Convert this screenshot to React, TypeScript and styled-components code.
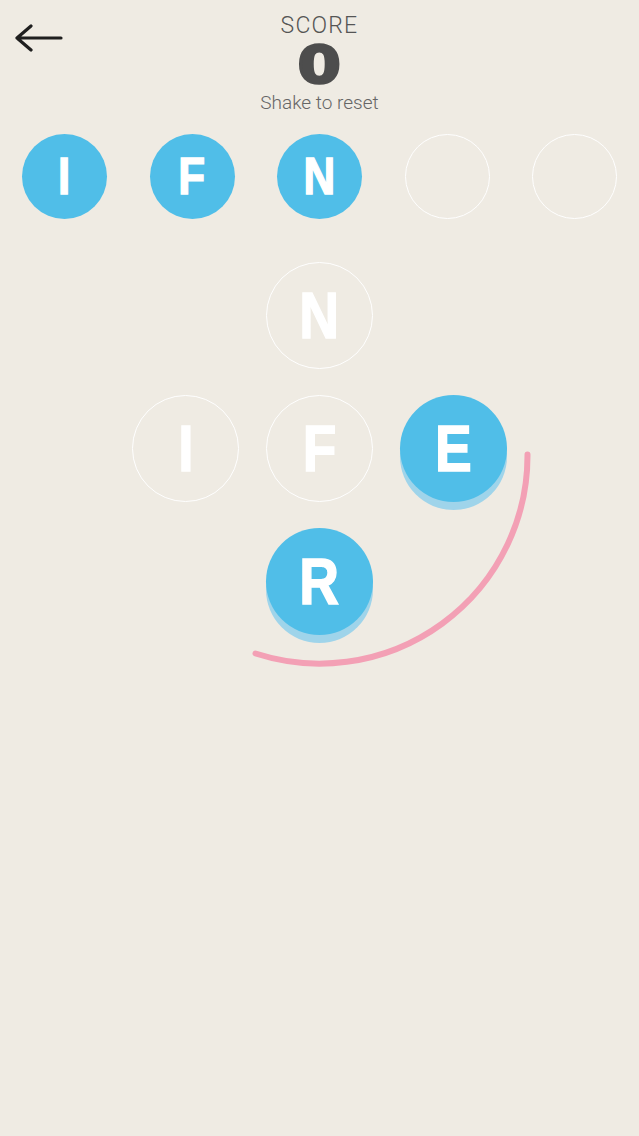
import React from "react";
import styled, { createGlobalStyle } from "styled-components";

const GlobalStyle = createGlobalStyle`
  html, body {
    margin: 0;
    padding: 0;
    background: #efebe3;
  }
  body {
    font-family: "Roboto", "Liberation Sans", sans-serif;
  }
`;

type Cell = { letter: string; filled: boolean; col: number; row: number };

const picked = ["I", "F", "N", "", ""];

const board: Cell[] = [
  { letter: "N", filled: false, col: 2, row: 1 },
  { letter: "I", filled: false, col: 1, row: 2 },
  { letter: "F", filled: false, col: 2, row: 2 },
  { letter: "E", filled: true, col: 3, row: 2 },
  { letter: "R", filled: true, col: 2, row: 3 },
];

const Page = styled.div`
  width: 639px;
  min-height: 1136px;
  background: #efebe3;
  display: flex;
  flex-direction: column;
`;

const Header = styled.header`
  display: grid;
  grid-template-columns: 1fr auto 1fr;
  align-items: start;
  padding-top: 12px;
  height: 122px;
  box-sizing: border-box;
`;

const BackButton = styled.button`
  justify-self: start;
  margin: 12px 0 0 14px;
  padding: 0;
  border: none;
  background: none;
  width: 50px;
  height: 30px;
  display: flex;
  cursor: pointer;
`;

const ScoreBlock = styled.div`
  display: flex;
  flex-direction: column;
  align-items: center;
`;

const ScoreLabel = styled.div`
  font-family: "Roboto", "Liberation Sans", sans-serif;
  font-weight: 300;
  font-size: 23px;
  line-height: 24px;
  height: 24px;
  margin-top: 2px;
  color: #555;
  letter-spacing: 1.2px;
`;

const ScoreValue = styled.div`
  font-family: "DejaVu Sans", sans-serif;
  font-weight: bold;
  font-size: 52px;
  line-height: 44px;
  height: 44px;
  margin-top: 5px;
  color: #4d4d4d;
  -webkit-text-stroke: 2.5px #4d4d4d;
  transform: scaleX(1.2);
`;

const Hint = styled.div`
  font-family: "Roboto", "Liberation Sans", sans-serif;
  font-weight: 300;
  font-size: 19px;
  line-height: 22px;
  color: #666;
  margin-top: 5px;
`;

const WordRow = styled.div`
  display: flex;
  justify-content: center;
  gap: 42.5px;
  margin-top: 12px;
`;

const Tile = styled.div<{ $filled: boolean; $size: number; $lift?: boolean }>`
  width: ${(p) => p.$size}px;
  height: ${(p) => p.$size}px;
  border-radius: 50%;
  box-sizing: border-box;
  display: flex;
  align-items: center;
  justify-content: center;
  background: ${(p) => (p.$filled ? "#50bee8" : "transparent")};
  border: ${(p) => (p.$filled ? "none" : "1.5px solid #ffffff")};
  box-shadow: ${(p) => (p.$lift ? "0 8px 0 #9fd4ea" : "none")};
  color: #ffffff;
  font-family: "Liberation Sans", "DejaVu Sans", sans-serif;
  font-weight: bold;
  font-size: ${(p) => Math.round(p.$size * 0.6)}px;
  line-height: 1;
`;

const Glyph = styled.span`
  display: inline-block;
  transform: scaleX(0.86);
  -webkit-text-stroke: 1.5px #ffffff;
`;

const Board = styled.div`
  position: relative;
  align-self: center;
  margin-top: 30px;
  display: grid;
  grid-template-columns: repeat(3, 134px);
  grid-template-rows: repeat(3, 133px);
`;

const Slot = styled.div<{ $col: number; $row: number }>`
  grid-column: ${(p) => p.$col};
  grid-row: ${(p) => p.$row};
  display: flex;
  align-items: center;
  justify-content: center;
`;

const Trail = styled.svg`
  position: absolute;
  left: 0;
  top: 0;
  overflow: visible;
  pointer-events: none;
`;

const ArrowLeft = () => (
  <svg width="50" height="30" viewBox="0 0 50 30" fill="none">
    <path
      d="M3 14 H47 M17 2 L3 14 L17 26"
      stroke="#1f1f1f"
      strokeWidth="3.2"
      strokeLinecap="round"
      strokeLinejoin="round"
    />
  </svg>
);

export default function App() {
  return (
    <Page>
      <GlobalStyle />
      <Header>
        <BackButton aria-label="Back">
          <ArrowLeft />
        </BackButton>
        <ScoreBlock>
          <ScoreLabel>SCORE</ScoreLabel>
          <ScoreValue>0</ScoreValue>
          <Hint>Shake to reset</Hint>
        </ScoreBlock>
        <div />
      </Header>

      <WordRow>
        {picked.map((l, i) => (
          <Tile key={i} $filled={l !== ""} $size={85}>
            {l && <Glyph>{l}</Glyph>}
          </Tile>
        ))}
      </WordRow>

      <Board>
        {board.map((c, i) => (
          <Slot key={i} $col={c.col} $row={c.row}>
            <Tile $filled={c.filled} $lift={c.filled} $size={107}>
              <Glyph>{c.letter}</Glyph>
            </Tile>
          </Slot>
        ))}
        <Trail width="402" height="399">
          <path
            d="M408.5 205.5 A208 208 0 0 1 136.5 404.5"
            stroke="#f3a0b5"
            strokeWidth="6"
            strokeLinecap="round"
            fill="none"
          />
        </Trail>
      </Board>
    </Page>
  );
}
